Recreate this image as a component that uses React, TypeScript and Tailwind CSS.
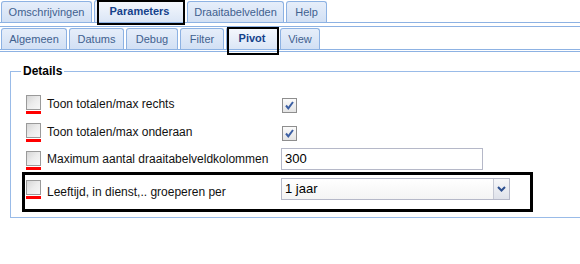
import React from 'react';

const font = { fontFamily: '"Liberation Sans", Arial, sans-serif' };

type Tab = { label: string; w: string; active?: boolean };

const topTabs: Tab[] = [
  { label: 'Omschrijvingen', w: 'w-[91px]' },
  { label: 'Parameters', w: 'w-[91px]', active: true },
  { label: 'Draaitabelvelden', w: 'w-[97px]' },
  { label: 'Help', w: 'w-[41px]' },
];

const subTabs: Tab[] = [
  { label: 'Algemeen', w: 'w-[66px]' },
  { label: 'Datums', w: 'w-[55px]' },
  { label: 'Debug', w: 'w-[52px]' },
  { label: 'Filter', w: 'w-[44px]' },
  { label: 'Pivot', w: 'w-[52px]', active: true },
  { label: 'View', w: 'w-[40px]' },
];

function TabButton({ tab, top }: { tab: Tab; top: boolean }) {
  return (
    <div className={`relative ${tab.w} ${tab.active ? 'h-[22px]' : 'h-[21px]'}`}>
      <div
        className={`flex h-full items-center justify-center rounded-t-[3px] border border-b-0 border-[#8db2e3] text-[11px] ${
          tab.active
            ? 'bg-gradient-to-b from-[#f5f8fd] to-[#dbe6f6] font-bold text-[#15428b]'
            : 'bg-gradient-to-b from-[#e6eefa] to-[#d2e0f4] text-[#41618f]'
        }`}
      >
        {tab.label}
      </div>
      {tab.active && top && (
        <div className="pointer-events-none absolute left-[3px] right-0 top-0 -bottom-[3px] border-2 border-black" />
      )}
      {tab.active && !top && (
        <div className="pointer-events-none absolute left-[1px] -right-[1px] top-0 -bottom-[6px] border-2 border-black" />
      )}
    </div>
  );
}

function RedBox() {
  return (
    <div className="flex w-[15px] shrink-0 flex-col">
      <div className="h-[15px] w-[15px] border border-[#9a9a9a] bg-gradient-to-br from-[#d6d6d6] via-[#ececec] to-[#f7f7f7]" />
      <div className="mt-[1px] h-[3px] w-[15px] bg-[#ff0000]" />
    </div>
  );
}

function CheckedBox() {
  return (
    <div className="ml-[1px] mt-[3px] flex h-[15px] w-[15px] items-center justify-center border border-[#8e8e8e] bg-gradient-to-b from-[#fbfbfb] to-[#e4e4e4]">
      <svg width="11" height="11" viewBox="0 0 11 11">
        <path d="M2 5.5 L4.3 8.3 L9 2" fill="none" stroke="#3c5fa3" strokeWidth="2" />
      </svg>
    </div>
  );
}

function Label({ children }: { children: React.ReactNode }) {
  return <div className="ml-[6px] w-[234px] shrink-0 text-[12px] text-[#111]">{children}</div>;
}

export default function App() {
  return (
    <div className="h-[264px] w-[580px] overflow-hidden bg-white" style={font}>
      {/* main tabs */}
      <div className="flex h-[23px] items-end gap-[2px] border-b border-[#8db2e3] pl-[1px]">
        {topTabs.map((t) => (
          <TabButton key={t.label} tab={t} top />
        ))}
      </div>
      <div className="h-[3px]" />
      {/* sub tabs */}
      <div className="flex h-[24px] items-end gap-[2px] border-y border-[#8db2e3] pl-[1px] pt-[1px]">
        {subTabs.map((t) => (
          <TabButton key={t.label} tab={t} top={false} />
        ))}
      </div>
      <div className="mt-[1px] h-0 border-t border-[#8db2e3]" />

      <fieldset className="ml-[10px] mt-[12px] w-[600px] border border-[#99bbe8] pb-[5px]">
        <legend className="ml-[10px] px-[2px] text-[12px] font-bold leading-[14px] text-black">Details</legend>

        <div className="mt-[13px] ml-[15px] flex h-[22px] items-start pt-[4px]">
          <RedBox />
          <Label>Toon totalen/max rechts</Label>
          <CheckedBox />
        </div>

        <div className="mt-[6px] ml-[15px] flex h-[22px] items-start pt-[4px]">
          <RedBox />
          <Label>Toon totalen/max onderaan</Label>
          <CheckedBox />
        </div>

        <div className="mt-[7px] ml-[15px] flex h-[22px] items-center">
          <div className="mt-[3px]">
            <RedBox />
          </div>
          <Label>Maximum aantal draaitabelveldkolommen</Label>
          <div className="flex h-[22px] w-[202px] items-center border border-[#b5b8c8] bg-white pl-[3px] text-[13px] text-black">
            300
          </div>
        </div>

        <div className="ml-[11px] mt-[2px] flex h-[40px] w-[511px] items-start border-[3px] border-black pl-[1px] pt-[3px]">
          <div className="mt-[2px]">
            <RedBox />
          </div>
          <div className="mt-[5px]">
            <Label>Leeftijd, in dienst,.. groeperen per</Label>
          </div>
          <div className="flex h-[22px] w-[229px] border border-[#b5b8c8] bg-gradient-to-b from-white to-[#f4f4f4]">
            <div className="flex flex-1 items-center pl-[3px] text-[13px] text-black">1 jaar</div>
            <div className="flex w-[16px] items-center justify-center border-l border-[#c6c9d4] bg-gradient-to-b from-[#f6f7f9] to-[#dfe2ea]">
              <svg width="9" height="6" viewBox="0 0 9 6">
                <path d="M1 1 L4.5 4.5 L8 1" fill="none" stroke="#2c4f8f" strokeWidth="2" />
              </svg>
            </div>
          </div>
        </div>
      </fieldset>
    </div>
  );
}
